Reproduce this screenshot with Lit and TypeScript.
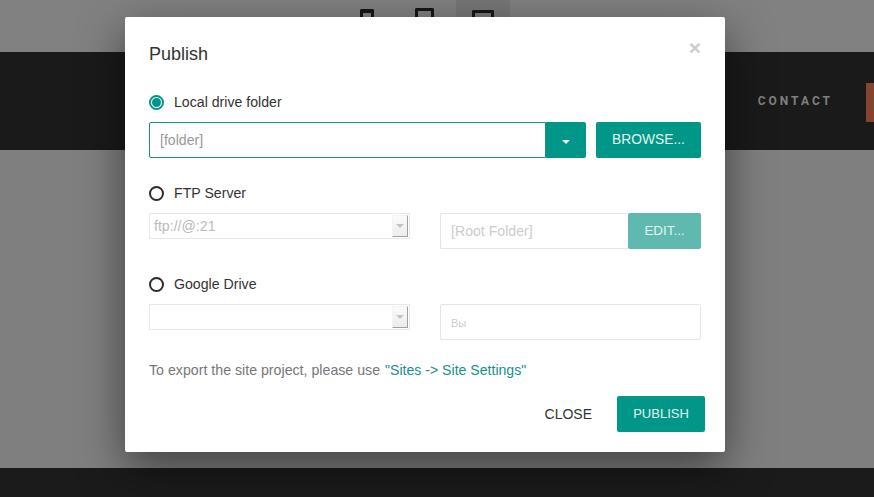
import { LitElement, html, css } from "lit";
import { customElement } from "lit/decorators.js";

@customElement("app-root")
export class AppRoot extends LitElement {
  static styles = css`
    :host { display: block; width: 874px; height: 497px; position: relative; overflow: hidden; font-family: "Liberation Sans", Arial, sans-serif; font-size: 14.15px; color: #333; background: #808080; }
    .page { display: flex; flex-direction: column; height: 497px; }
    .toolbar { height: 52px; display: flex; background: #818181; padding-left: 360px; box-sizing: border-box; overflow: hidden; }
    .dev { border: 3px solid #161616; border-bottom: 0; border-radius: 2px 2px 0 0; box-sizing: border-box; height: 40px; }
    .phone { width: 14px; margin-top: 9px; border-top-width: 4px; }
    .tablet { width: 19px; margin: 8px 0 0 41px; }
    .slot { width: 54px; margin-left: 22px; background: #777; display: flex; justify-content: center; }
    .laptop { width: 22px; margin-top: 10px; }
    .nav { height: 98px; background: #1a1a1a; display: flex; align-items: center; justify-content: flex-end; }
    .contact { font-family: Roboto, sans-serif; font-weight: 700; font-size: 12px; letter-spacing: 3px; color: #7f7f7f; margin-right: 33px; }
    .cta { width: 8px; height: 39px; background: #85442f; margin-top: 3px; }
    .mid { height: 318px; background: #7f7f7f; }
    .foot { flex: 1; background: #1b1b1b; }

    .modal { position: absolute; left: 125px; top: 17px; width: 600px; height: 435px; box-sizing: border-box; background: #fff; border-radius: 2px; padding: 25px 24px 0; box-shadow: 0 15px 45px rgba(0,0,0,.5); }
    .title { font-size: 18px; line-height: 24px; color: #333; }
    .x { position: absolute; right: 24px; top: 18px; font-size: 21px; line-height: 26px; font-weight: 700; color: #ccc; }
    .radio-row { display: flex; align-items: center; gap: 10px; height: 20px; line-height: 20px; }
    .r1 { margin-top: 26px; }
    .r2 { margin-top: 25px; }
    .radio { width: 15px; height: 15px; box-sizing: border-box; border: 2.5px solid #2b2b2b; border-radius: 50%; display: flex; align-items: center; justify-content: center; }
    .radio.on { border-color: #009688; border-width: 2px; }
    .radio.on::after { content: ""; width: 9px; height: 9px; border-radius: 50%; background: #009688; }
    .field-row { display: flex; margin-top: 10px; height: 36px; }
    .input { box-sizing: border-box; height: 36px; line-height: 34px; padding: 0 10px; border: 1px solid #e6e6e6; background: #fff; color: #ccc; }
    .main-input { width: 397px; border-color: #1a8f85; color: #999; border-radius: 2px 0 0 2px; }
    .btn { box-sizing: border-box; height: 36px; line-height: 36px; background: #009688; color: #e2f3f1; text-align: center; border-radius: 2px; }
    .caret-btn { width: 40px; border-radius: 0 2px 2px 0; display: flex; align-items: center; justify-content: center; padding-top: 4px; }
    .caret { width: 0; height: 0; border-left: 4px solid transparent; border-right: 4px solid transparent; border-top: 4px solid #fff; }
    .browse { width: 105px; margin-left: 10px; font-size: 13.8px; }
    .pair { display: grid; grid-template-columns: 261px 261px; gap: 30px; margin-top: 10px; }
    .select { box-sizing: border-box; height: 26px; border: 1px solid #e8e8e8; display: flex; justify-content: space-between; padding: 1px 1px 1px 4px; line-height: 22px; color: #bbb; background: #fff; }
    .arrow { width: 16px; height: 22px; box-sizing: border-box; background: linear-gradient(#fbfbfb, #ececec); border: 1px solid #f4f4f4; border-right-color: #a0a0a0; border-bottom-color: #a0a0a0; display: flex; align-items: center; justify-content: center; }
    .arrow::after { content: ""; border-left: 4px solid transparent; border-right: 4px solid transparent; border-top: 4px solid #c4c4c4; }
    .group { display: flex; height: 36px; }
    .group .input { flex: 1; border-right: 0; border-radius: 2px 0 0 2px; }
    .edit { width: 73px; background: #5fb9ae; font-size: 13.4px; }
    .full { border-radius: 2px; font-size: 11px; line-height: 36px; }
    .note { margin-top: 20px; height: 20px; line-height: 20px; color: #777; font-size: 14.2px; }
    .note a { color: #16918a; text-decoration: none; margin-left: 1px; font-size: 14.1px; }
    .actions { display: flex; justify-content: flex-end; align-items: center; margin: 16px -4px 0 0; }
    .close { color: #333; margin-right: 25px; font-size: 14px; }
    .publish { width: 88px; font-size: 13px; }
  `;

  render() {
    return html`
      <div class="page">
        <div class="toolbar">
          <div class="dev phone"></div>
          <div class="dev tablet"></div>
          <div class="slot"><div class="dev laptop"></div></div>
        </div>
        <div class="nav"><span class="contact">CONTACT</span><div class="cta"></div></div>
        <div class="mid"></div>
        <div class="foot"></div>
      </div>
      <div class="modal">
        <div class="x">×</div>
        <div class="title">Publish</div>
        <div class="radio-row r1"><span class="radio on"></span>Local drive folder</div>
        <div class="field-row">
          <div class="input main-input">[folder]</div>
          <div class="btn caret-btn"><span class="caret"></span></div>
          <div class="btn browse">BROWSE...</div>
        </div>
        <div class="radio-row r2"><span class="radio"></span>FTP Server</div>
        <div class="pair">
          <div class="select"><span>ftp://@:21</span><span class="arrow"></span></div>
          <div class="group"><div class="input">[Root Folder]</div><div class="btn edit">EDIT...</div></div>
        </div>
        <div class="radio-row r2"><span class="radio"></span>Google Drive</div>
        <div class="pair">
          <div class="select"><span></span><span class="arrow"></span></div>
          <div class="input full">Вы</div>
        </div>
        <div class="note">To export the site project, please use <a>"Sites -&gt; Site Settings"</a></div>
        <div class="actions"><span class="close">CLOSE</span><div class="btn publish">PUBLISH</div></div>
      </div>
    `;
  }
}
